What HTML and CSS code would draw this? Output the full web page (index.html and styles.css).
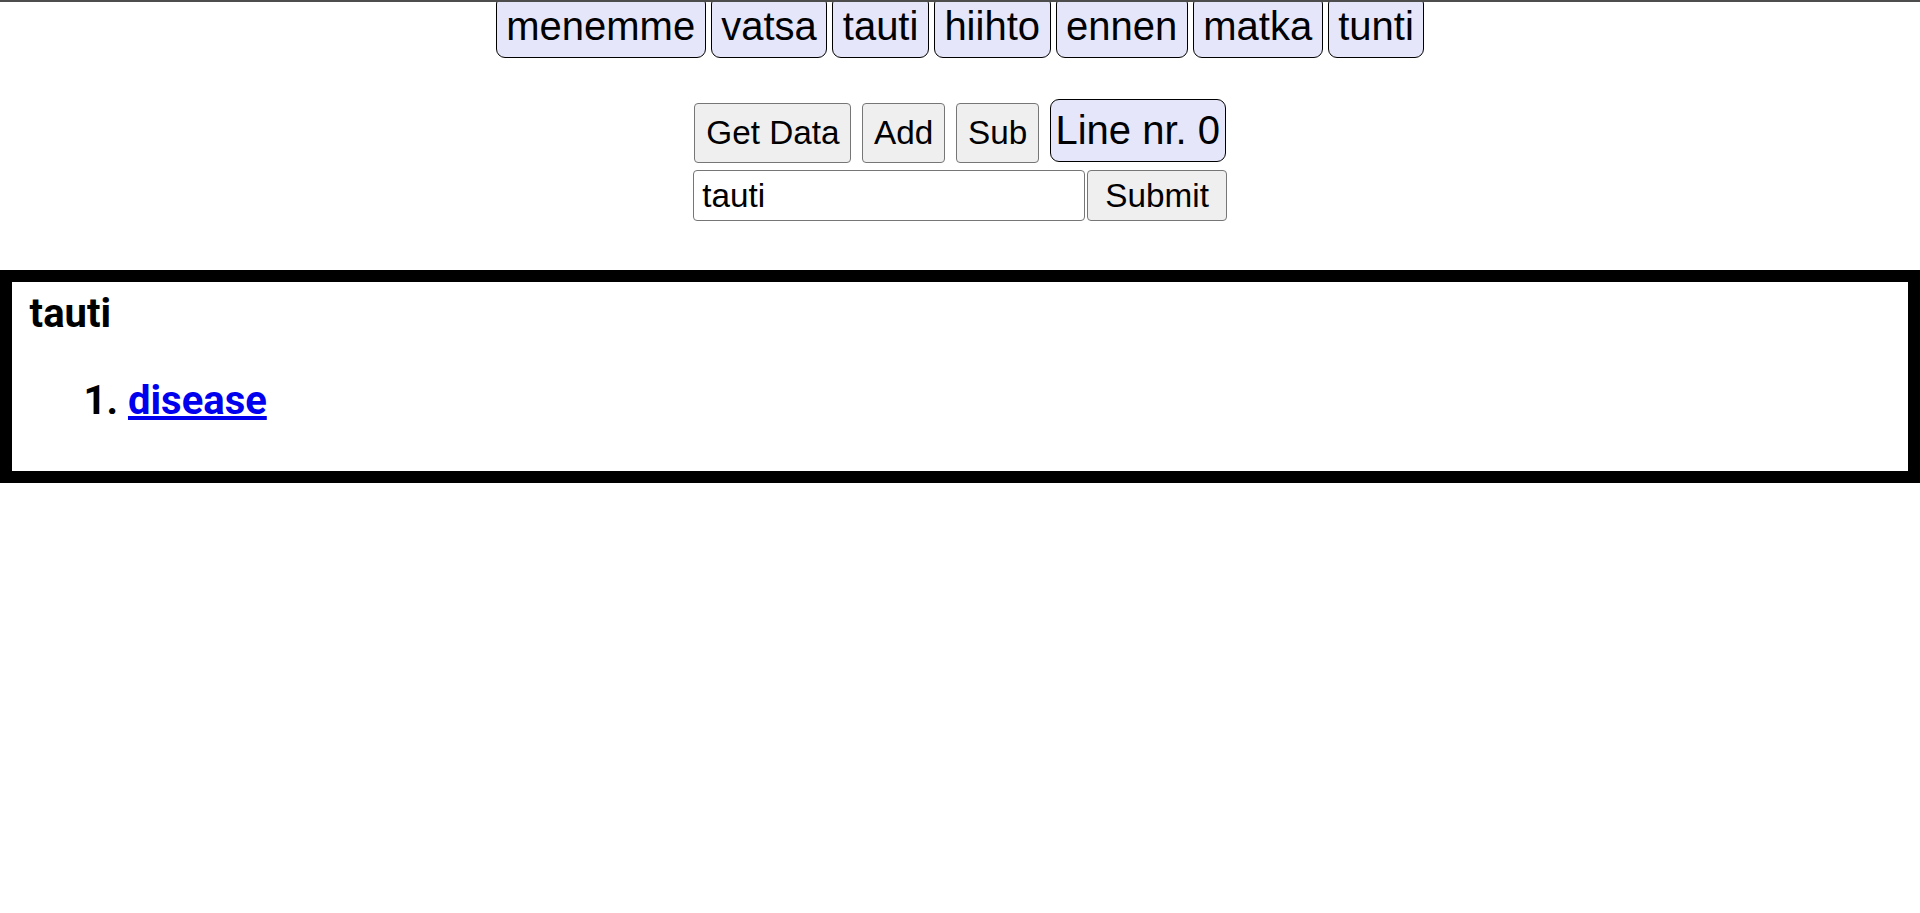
FILE: index.html
```html
<!DOCTYPE html>
<html lang="fi">
<head>
<meta charset="utf-8">
<title>Sanat</title>
<link rel="stylesheet" href="styles.css">
</head>
<body>
<div class="page">
  <div class="words">
    <div class="word-row">
      <button class="word">menemme</button>
      <button class="word">vatsa</button>
      <button class="word">tauti</button>
      <button class="word">hiihto</button>
      <button class="word">ennen</button>
      <button class="word">matka</button>
      <button class="word">tunti</button>
    </div>
  </div>
  <div class="controls">
    <button class="btn">Get Data</button>
    <button class="btn">Add</button>
    <button class="btn">Sub</button>
    <span class="line-nr">Line nr. 0</span>
  </div>
  <form class="search">
    <input class="search-input" type="text" value="tauti">
    <button class="btn submit" type="button">Submit</button>
  </form>
  <div class="result">
    <h2 class="result-title">tauti</h2>
    <ol class="result-list">
      <li><a href="#">disease</a></li>
    </ol>
  </div>
</div>
</body>
</html>
```
FILE: styles.css
```css
html, body {
  margin: 0;
  padding: 0;
  background: #ffffff;
}

.page {
  font-family: "Liberation Sans", Arial, sans-serif;
  color: #000;
}

.words {
  border-top: 2px solid #4d4d4d;
  overflow: hidden;
}

.word-row {
  display: flex;
  justify-content: center;
  gap: 5px;
  margin-top: -6.6px;
}

.word,
.line-nr {
  font-family: "Liberation Sans", Arial, sans-serif;
  font-size: 40px;
  line-height: normal;
  color: #000;
  background: #e6e6fa;
  border: 1px solid #000;
  border-radius: 9px;
  padding: 8px 9.5px;
  margin: 0;
}

.line-nr {
  padding: 8.2px 4.5px;
  display: inline-block;
}

.controls {
  display: flex;
  justify-content: center;
  align-items: baseline;
  gap: 11px;
  margin-top: 40.3px;
}

.btn {
  font-family: "Liberation Sans", Arial, sans-serif;
  font-size: 33.3px;
  line-height: normal;
  color: #000;
  background: #efefef;
  border: 1px solid #767676;
  border-radius: 4px;
  padding: 10.35px 10.8px;
  margin: 0;
}

.search {
  display: flex;
  justify-content: center;
  align-items: stretch;
  gap: 2.4px;
  margin: 7px 0 0;
}

.search-input {
  font-family: "Liberation Sans", Arial, sans-serif;
  font-size: 33.3px;
  line-height: normal;
  color: #000;
  width: 392px;
  box-sizing: border-box;
  border: 1px solid #767676;
  border-radius: 4px;
  padding: 5.35px 8.5px;
  margin: 0;
  background: #fff;
}

.submit {
  padding: 5.35px 17px;
  width: 140px;
}

.result {
  margin-top: 48.6px;
  border: 12px solid #000;
  padding: 8px 17.6px 8px;
  font-family: Roboto, "Liberation Sans", sans-serif;
}

.result-title {
  font-family: Roboto, sans-serif;
  font-weight: 700;
  font-size: 40px;
  line-height: normal;
  margin: 0;
}

.result-list {
  font-family: Roboto, sans-serif;
  font-weight: 700;
  font-size: 40px;
  line-height: normal;
  margin: 40px 0 39.2px;
  padding-left: 98.4px;
}

.result-list a {
  color: #0000ee;
  text-decoration: underline;
}
```
